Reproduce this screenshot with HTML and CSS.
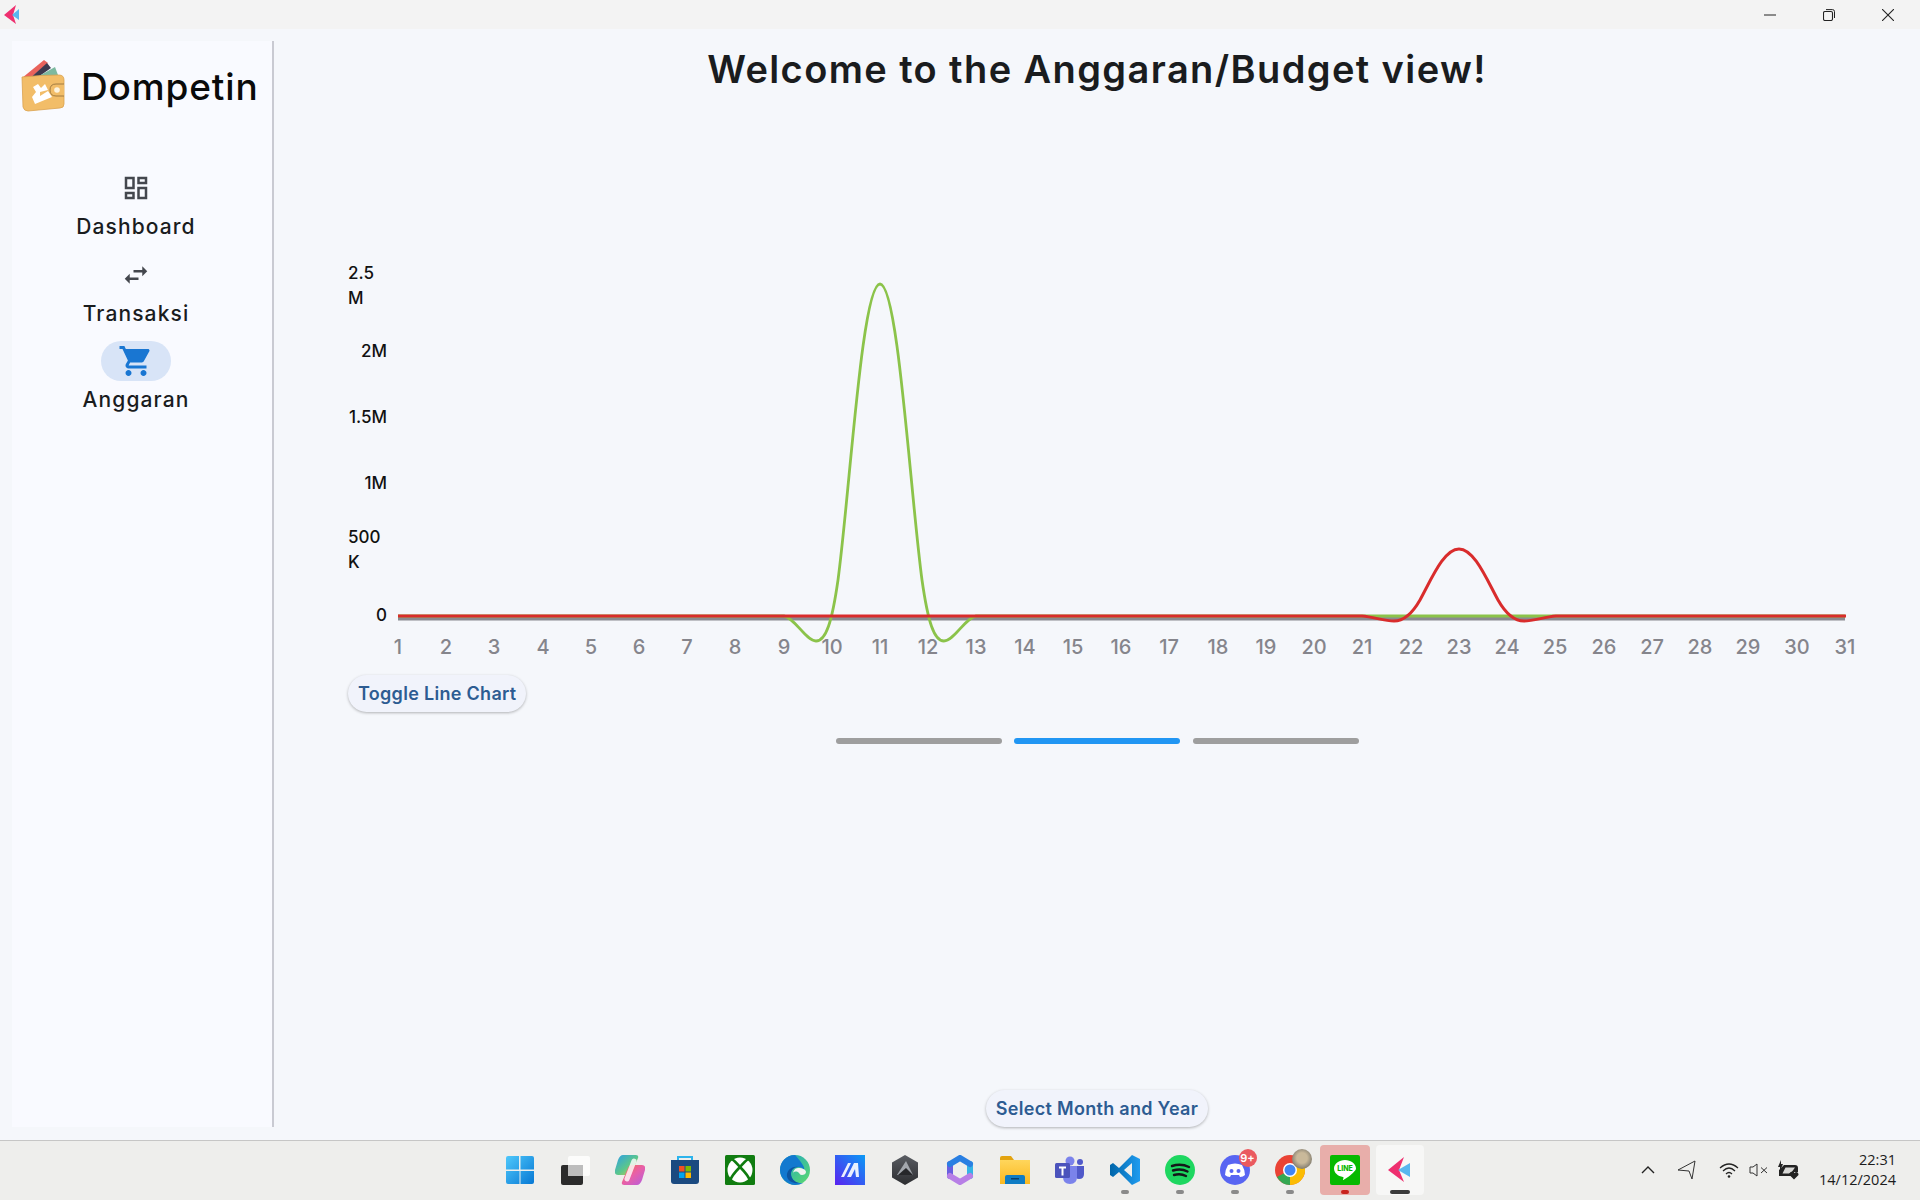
FILE: index.html
```html
<!DOCTYPE html>
<html lang="id">
<head>
  <meta charset="UTF-8">
  <meta name="viewport" content="width=device-width, initial-scale=1.0">
  <title>Dompetin</title>
  <link rel="stylesheet" href="styles.css">
</head>
<body>
<svg width="0" height="0" class="defs">
  <defs>
    <linearGradient id="gWin" x1="0" y1="0" x2="1" y2="1"><stop offset="0" stop-color="#4fc8fb"/><stop offset="1" stop-color="#0778d4"/></linearGradient>
    <linearGradient id="gMa" x1="0" y1="1" x2="1" y2="0"><stop offset="0" stop-color="#5a22f0"/><stop offset="1" stop-color="#0a9af5"/></linearGradient>
    <linearGradient id="gCopA" x1="0" y1="0" x2="1" y2="1"><stop offset="0" stop-color="#2d9fe8"/><stop offset=".55" stop-color="#5cc78a"/><stop offset="1" stop-color="#f5c63c"/></linearGradient>
    <linearGradient id="gCopB" x1="0" y1="0" x2="1" y2="1"><stop offset="0" stop-color="#f5703c"/><stop offset=".5" stop-color="#e85fa8"/><stop offset="1" stop-color="#b35ee0"/></linearGradient>
    <linearGradient id="gEdge" x1="0" y1="0" x2="1" y2="1"><stop offset="0" stop-color="#1aa3c9"/><stop offset="1" stop-color="#5fdc6a"/></linearGradient>
    <linearGradient id="gVs" x1="0" y1="0" x2="1" y2="0"><stop offset="0" stop-color="#0065a9"/><stop offset="1" stop-color="#1f9cf0"/></linearGradient>
    <linearGradient id="gFolder" x1="0" y1="0" x2="0" y2="1"><stop offset="0" stop-color="#ffd65c"/><stop offset="1" stop-color="#fbb81f"/></linearGradient>
    <linearGradient id="gHex" x1="0" y1="0" x2="0" y2="1"><stop offset="0" stop-color="#5a5d63"/><stop offset="1" stop-color="#2c2d30"/></linearGradient>
  </defs>
</svg>

<!-- Window title bar -->
<header class="titlebar">
  <svg class="app-mark" width="16" height="20" viewBox="0 0 16 20">
    <path d="M12 0 L0 10 L12 19 L9 10 Z" fill="#ee2f6f"/>
    <path d="M15 4 L8 10 L15 15 Z" fill="#58b7ee"/>
  </svg>
  <div class="win-controls">
    <button class="win-btn"><svg width="12" height="12" viewBox="0 0 12 12"><path d="M0 6H12" stroke="#222" fill="none"/></svg></button>
    <button class="win-btn"><svg width="12" height="12" viewBox="0 0 12 12"><rect x=".5" y="2.500" width="9" height="9" rx="1.500" stroke="#222" stroke-width="1.100" fill="none"/><path d="M3 .6h6.500a2 2 0 0 1 2 2V9" stroke="#222" fill="none"/></svg></button>
    <button class="win-btn"><svg width="12" height="12" viewBox="0 0 12 12"><path d="M0 0L12 12M12 0L0 12" stroke="#222" stroke-width="1.100" fill="none"/></svg></button>
  </div>
</header>

<div class="app">
  <!-- Sidebar -->
  <aside class="sidebar">
    <div class="brand">
      <svg class="brand-logo" width="46" height="52" viewBox="0 0 46 52">
        <path d="M2 18 L24 0 L28 3 L8 20 Z" fill="#e9625c"/>
        <path d="M8 20 L27 3 L31 8 L14 20 Z" fill="#3d3a4f"/>
        <path d="M10 21 L35 7 L38 15 L20 22 Z" fill="#7db9a0"/>
        <path d="M2 17 Q22 15 39 15 Q44 15 44 20 L44 44 Q44 48 40 48 L8 51 Q4 51 3 47 Z" fill="#f2bd68" stroke="#dba24f" stroke-width=".8"/>
        <path d="M13 27 L18 24 L21 28 L25 24 L28 30 L20 32 L20 36 L28 31 L32 37 L15 44 L12 37 L16 32 Z" fill="#fff"/>
        <path d="M44 24 H36 Q30 24 30 30 Q30 36 36 36 H44" fill="#f2bd68" stroke="#8d6b38" stroke-width=".8"/>
        <circle cx="37" cy="30" r="2.800" fill="#fdf3de"/>
      </svg>
      <span class="brand-name">Dompetin</span>
    </div>
    <nav class="rail">
      <div class="rail-item">
        <span class="rail-icon"><svg width="30" height="30" viewBox="0 0 24 24" fill="#44474e"><path d="M19 5v2h-4V5h4M9 5v6H5V5h4m10 8v6h-4v-6h4M9 17v2H5v-2h4M21 3h-8v6h8V3zM11 3H3v10h8V3zm10 8h-8v10h8V11zm-10 4H3v6h8v-6z"/></svg></span>
        <span class="rail-label">Dashboard</span>
      </div>
      <div class="rail-item">
        <span class="rail-icon"><svg width="30" height="30" viewBox="0 0 24 24" fill="#44474e"><path d="M6.990 11L3 15l3.990 4v-3H14v-2H6.990v-3zM21 9l-3.990-4v3H10v2h7.010v3L21 9z"/></svg></span>
        <span class="rail-label">Transaksi</span>
      </div>
      <div class="rail-item active">
        <span class="rail-icon"><svg width="36" height="36" viewBox="0 0 24 24" fill="#1976d2"><path d="M7 18c-1.100 0-1.990.9-1.990 2S5.900 22 7 22s2-.9 2-2-.9-2-2-2zM1 2v2h2l3.600 7.590-1.350 2.450c-.16.28-.25.61-.25.96 0 1.100.9 2 2 2h12v-2H7.420c-.14 0-.25-.11-.25-.25l.03-.12.9-1.630h7.450c.75 0 1.410-.41 1.750-1.030l3.580-6.490c.08-.14.12-.31.12-.48 0-.55-.45-1-1-1H5.210l-.94-2H1zm16 16c-1.100 0-1.990.9-1.990 2s.89 2 1.990 2 2-.9 2-2-.9-2-2-2z"/></svg></span>
        <span class="rail-label">Anggaran</span>
      </div>
    </nav>
  </aside>
  <div class="divider"></div>

  <!-- Content -->
  <main class="content">
    <h1 class="page-title">Welcome to the Anggaran/Budget view!</h1>

    <svg class="chart" width="1540" height="400" viewBox="340 260 1540 400">
      <g class="y-labels">
        <text x="348" y="279">2.5</text><text x="348" y="304">M</text>
        <text x="387" y="357" text-anchor="end">2M</text>
        <text x="387" y="423" text-anchor="end">1.5M</text>
        <text x="387" y="489" text-anchor="end">1M</text>
        <text x="348" y="543">500</text><text x="348" y="568">K</text>
        <text x="387" y="621" text-anchor="end">0</text>
      </g>
      <g class="x-labels">
        <text x="398" y="654">1</text><text x="446" y="654">2</text><text x="494" y="654">3</text><text x="543" y="654">4</text><text x="591" y="654">5</text><text x="639" y="654">6</text><text x="687" y="654">7</text><text x="735" y="654">8</text><text x="784" y="654">9</text><text x="832" y="654">10</text><text x="880" y="654">11</text><text x="928" y="654">12</text><text x="976" y="654">13</text><text x="1025" y="654">14</text><text x="1073" y="654">15</text><text x="1121" y="654">16</text><text x="1169" y="654">17</text><text x="1218" y="654">18</text><text x="1266" y="654">19</text><text x="1314" y="654">20</text><text x="1362" y="654">21</text><text x="1411" y="654">22</text><text x="1459" y="654">23</text><text x="1507" y="654">24</text><text x="1555" y="654">25</text><text x="1604" y="654">26</text><text x="1652" y="654">27</text><text x="1700" y="654">28</text><text x="1748" y="654">29</text><text x="1797" y="654">30</text><text x="1845" y="654">31</text>
      </g>
      <path d="M398 618.500H1845" stroke="#8a8a90" stroke-width="4" fill="none"/>
      <path d="M398 616H784C795 618 806 641 816 641C826 641 832 622 838 580C850 490 862 284 880 284C898 284 910 490 922 580C928 622 934 641 944 641C954 641 965 618 976 616H1845" stroke="#8bc34a" stroke-width="2.800" fill="none"/>
      <path d="M398 616H1362C1374 617 1384 621 1394 621C1404 621 1412 614 1420 600C1432 578 1444 549 1459 549C1474 549 1486 578 1498 600C1506 614 1514 621 1524 621C1534 621 1544 617 1556 616H1846" stroke="#d92c2c" stroke-width="3" fill="none"/>
    </svg>

    <div class="toggle-row"><button class="pill-btn">Toggle Line Chart</button></div>

    <div class="pager">
      <span class="pager-bar"></span>
      <span class="pager-bar current"></span>
      <span class="pager-bar"></span>
    </div>

    <div class="bottom-row"><button class="pill-btn">Select Month and Year</button></div>
  </main>
</div>

<!-- Windows taskbar -->
<footer class="taskbar">
  <div class="task-icons">
    <div class="task-icon"><svg width="30" height="30" viewBox="0 0 30 30"><path d="M1 3a2 2 0 0 1 2-2h11v13.500H1zM15.500 1H27a2 2 0 0 1 2 2v11.500H15.500zM1 16h13.500v13H3a2 2 0 0 1-2-2zM15.500 16H29v11a2 2 0 0 1-2 2H15.500z" fill="url(#gWin)"/></svg></div>
    <div class="task-icon"><svg width="30" height="30" viewBox="0 0 30 30"><rect x="1" y="10" width="22" height="20" rx="2" fill="#2b2b2b"/><rect x="8" y="1" width="22" height="20" rx="2" fill="#fff" opacity=".8"/><rect x="8" y="10" width="15" height="11" fill="#bdbdbd"/></svg></div>
    <div class="task-icon"><svg width="30" height="30" viewBox="0 0 30 30"><path d="M8 0H21Q24 0 23 3L17 17Q16 20 12 20H3Q-1 20 0 15L3 5Q5 0 8 0z" fill="url(#gCopA)"/><path d="M22 30H9Q6 30 7 27L13 13Q14 10 18 10H27Q31 10 30 15L27 25Q25 30 22 30z" fill="url(#gCopB)"/><path d="M19 6L12 24" stroke="#fff" stroke-width="5" stroke-linecap="round" opacity=".8"/></svg></div>
    <div class="task-icon"><svg width="30" height="30" viewBox="0 0 30 30"><path d="M8 6V2h14v4" stroke="#2db4ec" stroke-width="2" fill="none"/><path d="M1 5h28v21a3 3 0 0 1-3 3H4a3 3 0 0 1-3-3z" fill="#1b4a80"/><rect x="9" y="11" width="5.500" height="5.500" fill="#f25022"/><rect x="15.500" y="11" width="5.500" height="5.500" fill="#7fba00"/><rect x="9" y="17.500" width="5.500" height="5.500" fill="#00a4ef"/><rect x="15.500" y="17.500" width="5.500" height="5.500" fill="#ffb900"/></svg></div>
    <div class="task-icon"><svg width="30" height="30" viewBox="0 0 30 30"><rect width="30" height="30" rx="1.500" fill="#107c10"/><circle cx="15" cy="15" r="12.500" fill="#fff"/><path d="M7 4C11 7 13 10 15 12C17 10 19 7 23 4M15 12C10 17 6 22 5 26M15 12C20 17 24 22 25 26" stroke="#107c10" stroke-width="2.600" fill="none"/></svg></div>
    <div class="task-icon"><svg width="30" height="30" viewBox="0 0 30 30"><circle cx="15" cy="15" r="15" fill="url(#gEdge)"/><path d="M15 0C6 0 0 7 0 15c0 8 7 15 15 15 3 0 6-1 8-2-6 1-12-3-12-9 0-4 3-7 7-7 3 0 5 1 6 3 1-3-2-7-9-15z" fill="#1279cf"/><path d="M11 19c0-4 3-7 7-7-5-1-10 2-11 7-1 5 4 10 12 9-5-1-8-5-8-9z" fill="#0d55a0"/><path d="M13 19c0-3 2-6 5-6 5 0 8 2 8 4 0 2-2 3-4 3-2 0-2-1-3-2-2-2-6-2-6 1z" fill="#f2f2f0"/></svg></div>
    <div class="task-icon"><svg width="30" height="30" viewBox="0 0 30 30"><rect width="30" height="30" fill="url(#gMa)"/><path d="M6 22L13 8h3L9 22zM12 22L19 8h4l1 14h-3l-1-8-4 8z" fill="#fff" opacity=".9"/></svg></div>
    <div class="task-icon"><svg width="30" height="30" viewBox="0 0 30 30"><path d="M15 0L28 7.500V22.500L15 30L2 22.500V7.500Z" fill="url(#gHex)"/><path d="M16 6L23 20H7Z" fill="#a3a7ad"/><path d="M16 13L23 20H8Z" fill="#26272a"/></svg></div>
    <div class="task-icon"><svg width="30" height="30" viewBox="0 0 30 30"><g fill="none" stroke-width="6" stroke-linecap="round"><path d="M5 21V9" stroke="#6a5fe0"/><path d="M25 9V21" stroke="#35b3e6"/><path d="M25 21L15 27L5 21" stroke="#b77fe6"/><path d="M5 9L15 3L25 9" stroke="#2a7fe2"/></g><circle cx="15" cy="15" r="4" fill="#eeeeec"/></svg></div>
    <div class="task-icon"><svg width="30" height="28" viewBox="0 0 30 28"><path d="M0 2a2 2 0 0 1 2-2h9l3 4H0z" fill="#e3a30f"/><path d="M0 4h30v24H0z" fill="url(#gFolder)"/><path d="M5 28v-7a2 2 0 0 1 2-2h16a2 2 0 0 1 2 2v7z" fill="#0f7cc4"/><rect x="11" y="22" width="8" height="1.500" fill="#073f6e"/></svg></div>
    <div class="task-icon"><svg width="30" height="28" viewBox="0 0 30 28"><circle cx="15" cy="5" r="4.500" fill="#7b83eb"/><circle cx="25" cy="6" r="3" fill="#5059c9"/><path d="M21 10h8v8q0 5-5 5-2 0-3-1z" fill="#5059c9"/><path d="M8 10h14v11q0 7-7 7t-7-7z" fill="#7b83eb"/><rect y="7" width="15" height="15" rx="1.500" fill="#4b53bc"/><path d="M4 10.500h7v2H8.500v7h-2v-7H4z" fill="#fff"/></svg></div>
    <div class="task-icon has-dot"><svg width="30" height="30" viewBox="0 0 30 30"><path d="M22 0L30 4V26L22 30L9 17L3 22L0 20V10L3 8L9 13zM22 8L14 15L22 22z" fill="url(#gVs)"/></svg></div>
    <div class="task-icon has-dot"><svg width="30" height="30" viewBox="0 0 30 30"><circle cx="15" cy="15" r="15" fill="#1ed760"/><path d="M7 11q9-3 17 1M8 15.500q8-2.500 14.500 1M9 20q6.500-2 12 1" stroke="#14181a" stroke-width="2.400" stroke-linecap="round" fill="none"/></svg></div>
    <div class="task-icon has-dot"><svg width="30" height="30" viewBox="0 0 30 30"><circle cx="15" cy="15" r="15" fill="#5865f2"/><path d="M8 10q7-3 14 0 3 5 3 10-2 2-5 2l-1-2h-8l-1 2q-3 0-5-2 0-5 3-10z" fill="#fff"/><circle cx="11.500" cy="16" r="2" fill="#5865f2"/><circle cx="18.500" cy="16" r="2" fill="#5865f2"/></svg><span class="badge">9+</span></div>
    <div class="task-icon has-dot"><svg width="30" height="30" viewBox="0 0 30 30"><circle cx="15" cy="15" r="15" fill="#ea4335"/><path d="M15 15L2 22A15 15 0 0 0 15 30Z" fill="#34a853"/><path d="M15 15L15 30A15 15 0 0 0 28 7.500Z" fill="#fbbc04"/><circle cx="15" cy="15" r="7" fill="#fff"/><circle cx="15" cy="15" r="5.500" fill="#4285f4"/></svg><span class="avatar"></span></div>
    <div class="task-icon flagged"><svg width="30" height="30" viewBox="0 0 30 30"><rect width="30" height="30" rx="2" fill="#06b900"/><path d="M15 5c-6 0-11 3.800-11 8.600 0 4.300 4 7.800 9 8.500.8.200.6 1-.1 3 1-.300 7.300-4.400 10-7.200 2-2 3.100-2.600 3.100-4.300C26 8.800 21 5 15 5z" fill="#fff"/><text x="15" y="16" class="line-text">LINE</text></svg></div>
    <div class="task-icon pinned-app"><svg width="24" height="26" viewBox="0 0 24 26"><path d="M16 0L0 13L16 25L11 13Z" fill="#ee2f6f"/><path d="M22 6L10 13L22 20Z" fill="#58b7ee"/></svg></div>
  </div>
  <div class="tray">
    <svg class="tray-chev" width="14" height="8" viewBox="0 0 14 8"><path d="M1 7L7 1L13 7" stroke="#222" stroke-width="1.400" fill="none"/></svg>
    <svg class="tray-nav" width="20" height="20" viewBox="0 0 20 20"><path d="M18 1L1 10L12 11L15 19Z" stroke="#333" fill="none" stroke-linejoin="round"/></svg>
    <svg class="tray-wifi" width="20" height="16" viewBox="0 0 20 16"><path d="M1 6Q10-2 19 6M4 9Q10 3 16 9M7 12Q10 9 13 12" stroke="#222" stroke-width="1.200" fill="none"/><circle cx="10" cy="14.500" r="1.300" fill="#222"/></svg>
    <svg class="tray-vol" width="20" height="14" viewBox="0 0 20 14"><path d="M1 4H4L8 1V13L4 10H1Z" stroke="#333" fill="none"/><path d="M12 4.500L18 10M18 4.500L12 10" stroke="#333" fill="none"/></svg>
    <svg class="tray-batt" width="22" height="20" viewBox="0 0 22 20"><path d="M4 0L1 7H3V11L6 4H4Z" fill="#222"/><path d="M7 5H18Q21 5 21 8V12H17V16H2V10Z" fill="#222"/><path d="M8.500 7.500H18L15.500 11L12 13.500H5.500Z" fill="#d9d9d7"/><path d="M17 19.500L12.500 15Q12.500 12 15 12L17 13L19 12Q21.500 12 21.500 15Z" fill="#222"/></svg>
    <div class="clock"><span>22:31</span><span>14/12/2024</span></div>
  </div>
</footer>
</body>
</html>
```

FILE: styles.css
```css
* { margin: 0; padding: 0; box-sizing: border-box; font-family: 'Inter', 'Noto Sans', sans-serif; }
body { background: #f5f7fb; color: #1a1c1e; height: 100vh; overflow: hidden; display: flex; flex-direction: column; }
.defs { position: absolute; }

/* Title bar */
.titlebar {
  height: 29px;
  background: #f3f3f3;
  display: flex;
  align-items: center;
  justify-content: space-between;
  padding: 0 3px 0 4px;
}
.win-controls { display: flex; }
.win-btn {
  width: 59px;
  height: 29px;
  border: none;
  background: transparent;
  display: flex;
  align-items: center;
  justify-content: center;
}

/* App layout */
.app {
  flex: 1;
  display: flex;
  padding: 12px 0 13px 12px;
  min-height: 0;
}
.sidebar {
  width: 260px;
  padding-right: 12px;
  background: #f9faff;
  display: flex;
  flex-direction: column;
}
.brand {
  display: flex;
  align-items: center;
  gap: 15px;
  padding: 5px 0 0 8px;
  height: 85px;
}
.brand-name {
  font-size: 37px;
  font-weight: 500;
  color: #0a0a0a;
  letter-spacing: 0.85px;
}
.rail {
  display: flex;
  flex-direction: column;
  align-items: center;
  padding-top: 42px;
  gap: 9.5px;
}
.rail-item {
  display: flex;
  flex-direction: column;
  align-items: center;
  height: 77px;
}
.rail-icon {
  width: 70px;
  height: 40px;
  border-radius: 20px;
  display: flex;
  align-items: center;
  justify-content: center;
}
.rail-label {
  margin-top: 6px;
  font-size: 21px;
  font-weight: 500;
  line-height: 26px;
  letter-spacing: 1.1px;
  color: #1a1c1e;
}
.active .rail-icon { background: #d8e4f7; }
.divider { width: 2px; background: #c9cad2; flex-shrink: 0; }

/* Content */
.content {
  flex: 1;
  display: flex;
  flex-direction: column;
  align-items: stretch;
}
.page-title {
  text-align: center;
  font-size: 38px;
  font-weight: 600;
  line-height: 50px;
  letter-spacing: 1.4px;
  color: #1a1c1e;
  margin-top: 3px;
}
.chart { margin: 166px 0 0 66px; display: block; flex-shrink: 0; }
.y-labels text { font-size: 17px; font-weight: 500; fill: #111; }
.x-labels text { font-size: 20px; font-weight: 500; fill: #85858c; text-anchor: middle; }
.line-text { font-size: 7px; font-weight: 800; fill: #06b900; text-anchor: middle; }

.toggle-row { padding: 15px 0 0 74px; }
.pill-btn {
  height: 37px;
  padding: 0 10px;
  border: none;
  border-radius: 19px;
  background: #f1f3fb;
  box-shadow: 0 1px 3px rgba(0, 0, 0, 0.28);
  color: #2d5c92;
  font-size: 18px;
  font-weight: 600;
  letter-spacing: 0.3px;
}
.pager {
  display: flex;
  justify-content: center;
  gap: 12.5px;
  margin-top: 26px;
}
.pager-bar { width: 166px; height: 6px; border-radius: 3px; background: #9e9e9e; }
.pager-bar.current { background: #2196f3; }
.bottom-row { margin-top: auto; display: flex; justify-content: center; }

/* Taskbar */
.taskbar {
  height: 60px;
  background: #eeeeec;
  border-top: 1px solid #c6c6c6;
  display: flex;
  justify-content: center;
  position: relative;
}
.task-icons { display: flex; align-items: center; padding-bottom: 1px; }
.task-icon {
  width: 55px;
  height: 50px;
  display: flex;
  align-items: center;
  justify-content: center;
  position: relative;
}
.has-dot::after, .flagged::after {
  content: "";
  position: absolute;
  left: 50%;
  bottom: 1px;
  width: 8px;
  height: 4px;
  margin-left: -4px;
  border-radius: 2px;
  background: #8a8a8a;
}
.task-icon.flagged { background: #e8aeaa; border-radius: 4px; width: 50px; margin: 0 2.5px; }
.task-icon.flagged::after { background: #c9241f; }
.task-icon.pinned-app { background: #f7f7f6; border-radius: 4px; width: 48px; margin: 0 3.5px; }
.task-icon.pinned-app::after {
  content: "";
  position: absolute;
  left: 50%;
  bottom: 1px;
  width: 20px;
  height: 4px;
  margin-left: -10px;
  border-radius: 2px;
  background: #3a3a3a;
}
.badge {
  position: absolute;
  top: 4px;
  right: 6px;
  width: 18px;
  height: 18px;
  border-radius: 50%;
  background: #ea5a5f;
  color: #fff;
  font-size: 11px;
  font-weight: 600;
  line-height: 18px;
  text-align: center;
}
.avatar {
  position: absolute;
  top: 4px;
  right: 6px;
  width: 20px;
  height: 20px;
  border-radius: 50%;
  background: radial-gradient(circle at 50% 45%, #c9b99a 0 35%, #7f7a6e 75%);
}
.tray {
  position: absolute;
  right: 24px;
  top: 0;
  bottom: 0;
  display: flex;
  align-items: center;
  padding-bottom: 1px;
}
.tray-chev { margin-right: 22px; }
.tray-nav { margin-right: 22px; }
.tray-wifi { margin-right: 10px; }
.tray-vol { margin-right: 8px; }
.tray-batt { margin-right: 20px; }
.clock {
  display: flex;
  flex-direction: column;
  align-items: flex-end;
  line-height: 20px;
}
.clock span { font-family: 'Open Sans', sans-serif; font-size: 14.5px; color: #1c1c1c; }
```
